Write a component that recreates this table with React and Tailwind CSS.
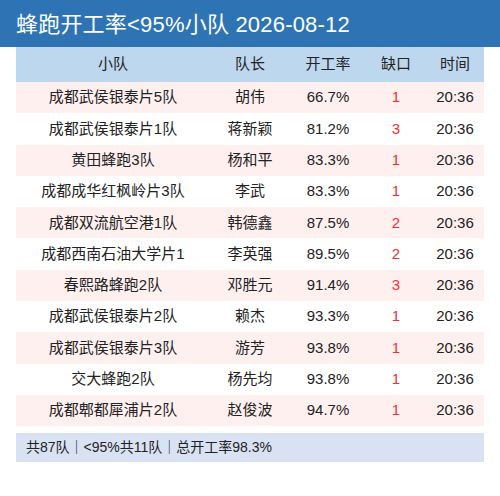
import React from 'react';

const rows = [
    ['成都武侯银泰片5队', '胡伟', '66.7%', '1', '20:36'],
    ['成都武侯银泰片1队', '蒋新颖', '81.2%', '3', '20:36'],
    ['黄田蜂跑3队', '杨和平', '83.3%', '1', '20:36'],
    ['成都成华红枫岭片3队', '李武', '83.3%', '1', '20:36'],
    ['成都双流航空港1队', '韩德鑫', '87.5%', '2', '20:36'],
    ['成都西南石油大学片1', '李英强', '89.5%', '2', '20:36'],
    ['春熙路蜂跑2队', '邓胜元', '91.4%', '3', '20:36'],
    ['成都武侯银泰片2队', '赖杰', '93.3%', '1', '20:36'],
    ['成都武侯银泰片3队', '游芳', '93.8%', '1', '20:36'],
    ['交大蜂跑2队', '杨先均', '93.8%', '1', '20:36'],
    ['成都郫都犀浦片2队', '赵俊波', '94.7%', '1', '20:36'],
];

const cols = ['w-[194px]', 'w-[80px]', 'w-[76px]', 'w-[60px]', 'flex-1'];

export default function App() {
    return (
        <div className="w-[500px] h-[496px] bg-white font-['Liberation_Sans','Noto_Sans_CJK_SC',sans-serif] text-[#222]">
            <div className="h-[47px] bg-[#2e74b5] flex items-center pl-4 pt-0.5">
                <h1 className="text-white text-[22px] tracking-[0.2px]">蜂跑开工率&lt;95%小队 2026-08-12</h1>
            </div>

            <div className="mx-4">
                <div className="flex h-[35px] items-center bg-[#bdd7ee] text-[15px]">
                    {['小队', '队长', '开工率', '缺口', '时间'].map((h, i) => (
                        <div key={h} className={`${cols[i]} text-center`}>{h}</div>
                    ))}
                </div>

                {rows.map((r, idx) => (
                    <div key={idx} className={`flex h-[31.3px] items-center text-[15px] ${idx % 2 === 0 ? 'bg-[#fff0f0]' : 'bg-white'}`}>
                        {r.map((c, i) => (
                            <div key={i} className={`${cols[i]} text-center ${i === 3 ? 'text-[#f23030]' : ''}`}>{c}</div>
                        ))}
                    </div>
                ))}

                <div className="mt-[7px] h-[29px] bg-[#d9e2f3] flex items-center pl-2.5 text-[14px]">
                    共87队｜&lt;95%共11队｜总开工率98.3%
                </div>
            </div>
        </div>
    );
}
